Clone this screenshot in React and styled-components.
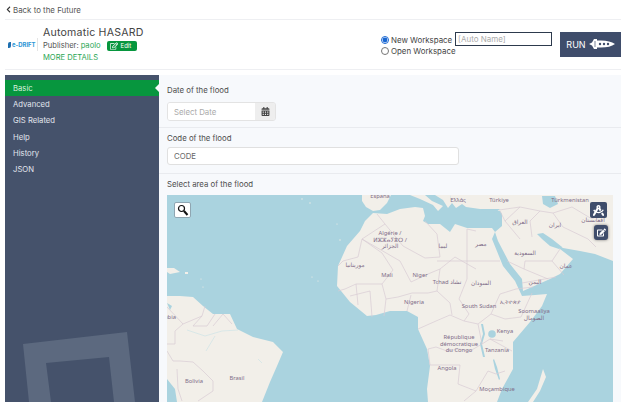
import React from 'react';
import styled, { createGlobalStyle } from 'styled-components';
import { FaCalendarAlt, FaChevronLeft, FaDraftingCompass, FaEdit, FaRegEdit } from 'react-icons/fa';

const GlobalStyle = createGlobalStyle`
  html, body { margin: 0; padding: 0; background: #fff; }
  body { font-family: Inter, "Open Sans", "Liberation Sans", sans-serif; color: #4a4a4a; overflow: hidden; }
  * { box-sizing: border-box; }
`;

const menu = ['Basic', 'Advanced', 'GIS Related', 'Help', 'History', 'JSON'];

// label text, then centre x and baseline y in page pixels; several lines share one <text>
const labels = [
  [['España'], 380, 198.5], [['Ελλάς'], 458, 203], [['Türkiye'], 499, 203], [['Türkmenistan'], 570, 203],
  [['العراق'], 520, 225], [['ایران'], 555, 228], [['افغانستان'], 593, 223], [['مصر'], 481, 247],
  [['ليبيا'], 443, 249], [['السعودية'], 525, 256], [['عمان'], 566, 269],
  [['Algérie /', 'ⵍⵣⵣⴰⵢⴻⵔ /', 'الجزائر'], 390, 236], [['موريتانيا'], 355, 268], [['Mali'], 387, 278],
  [['Niger'], 420, 278], [['Tchad تشاد'], 447, 285], [['السودان'], 481, 286], [['اليمن'], 535, 285],
  [['Nigeria'], 414, 305], [['South Sudan'], 479, 309], [['ኢትዮጵያ'], 510, 305],
  [['Soomaaliya', 'الصومال'], 534, 314], [['Kenya'], 505, 334],
  [['République', 'démocratique', 'du Congo'], 459, 340], [['Tanzania'], 497, 353], [['Angola'], 447, 371],
  [['Moçambique'], 497, 392], [['Bolivia'], 194, 384], [['Brasil'], 237, 381], [['Colombia'], 163, 320],
];

const borders = [
  'M167,308 L183,325 L175,332 L175,345 L167,345',
  'M183,325 L202,317 L205,307 M193,327 L202,317',
  'M193,327 L207,327 L215,315 M213,327 L223,315 L232,325',
  'M167,352 L173,362 L180,362 L193,363 L203,372 L213,382 L213,392 L198,402',
  'M177,370 L178,390 L182,402',
  'M377,215 L385,225 L362,240 L358,258 L343,262 L338,267',
  'M362,240 L400,262 L411,283 L428,275 L440,270 L455,258 L476,270',
  'M385,225 L403,247 L425,259 L440,258 L437,235 L425,222',
  'M362,240 L382,254 L393,271 L382,285 L356,285 L345,290 L338,292',
  'M476,232 L467,230 L467,262 L500,262',
  'M467,262 L437,262 M440,270 L437,292 L450,304 L452,316',
  'M467,262 L467,280 L459,300 L469,315 L464,322 L478,325 L491,315 L500,295 L516,290 L533,288',
  'M491,315 L505,320 L521,318 L532,294',
  'M382,285 L386,300 L398,298 L412,294 L428,294 L437,292',
  'M407,312 L411,296 M384,317 L386,300 M372,318 L370,292 M356,285 L358,306',
  'M350,297 L370,292',
  'M418,330 L436,322 L450,316 L464,322',
  'M428,350 L436,348 L447,352 L459,350 L470,352 L482,345 L478,325',
  'M482,345 L490,340 L503,342 M490,340 L512,352',
  'M428,350 L430,366 L460,366 L458,385 L476,392 L488,372 L496,375',
  'M476,392 L464,402 M496,375 L505,372',
  'M520,240 L505,222 L520,208 L540,212 L553,214 L563,228 L588,240 L596,248',
  'M505,222 L500,212 M520,208 L499,211 M540,212 L530,222 L532,238',
  'M553,214 L572,208 L592,220 L608,212',
  'M507,262 L524,270 L548,280',
  'M524,270 L525,262 L552,262 L560,250',
  'M522,284 L556,278 M564,276 L552,262',
];

const Rocket = () => (
  <svg width="26" height="12" viewBox="0 0 26 12">
    <path d="M0,6 L3,4.5 L5,1 L8,1 L8,2.5 L12,2.5 Q21,2.5 26,6 Q21,9.5 12,9.5 L8,9.5 L8,11 L5,11 L3,7.5 Z" fill="#fff" />
    <path d="M6,3 L6,9" stroke="#3f4d6b" strokeWidth="0.7" />
    <circle cx="11" cy="6" r="1.2" fill="#3f4d6b" />
    <circle cx="15" cy="6" r="1.2" fill="#3f4d6b" />
    <circle cx="19" cy="6" r="1.2" fill="#3f4d6b" />
  </svg>
);

const MapArt = () => (
  <MapSvg viewBox="167 196 446 207" preserveAspectRatio="none">
    <rect x="167" y="196" width="446" height="207" fill="#aad3df" />
    <g fill="#f2efe9">
      <path d="M362,196 L391,196 L387,204 L380,211 L373,212 L366,208 L362,202 Z" />
      <path d="M410,196 L425,196 L432,202 L443,207 L438,212 L433,206 L420,200 Z" />
      <path d="M435,196 L450,196 L452,204 L448,209 L443,201 Z" />
      <path d="M450,196 L613,196 L613,262 L595,255 L580,252 L563,249 L557,245 L560,250 L573,260 L560,275 L550,280 L523,292 L522,280 L510,265 L498,242 L495,233 L502,227 L502,215 L500,212 L480,210 L466,208 L462,205 L456,209 L452,204 Z" />
      <path d="M373,214 L387,215 L400,210 L415,208 L423,209 L425,217 L423,222 L428,225 L440,225 L450,233 L455,225 L467,229 L480,229 L492,229 L495,233 L492,240 L503,267 L515,282 L522,297 L535,296 L547,295 L542,307 L530,323 L513,343 L513,370 L502,390 L497,403 L428,403 L427,390 L430,367 L427,350 L418,330 L418,318 L407,312 L390,312 L376,316 L367,317 L350,303 L337,287 L338,267 L347,247 L360,232 L365,222 Z" />
      <path d="M537,390 L543,370 L546,378 L540,392 L533,403 L528,403 Z" />
      <path d="M167,297 L180,297 L193,298 L203,307 L213,315 L230,315 L237,330 L253,338 L273,343 L283,353 L277,367 L270,383 L262,403 L177,403 L175,390 L167,380 Z" />
      <path d="M167,269 L174,269 L180,273 L170,275 L167,273 Z" />
      <path d="M185,273 L188,273 L188,275 L185,275 Z" />
    </g>
    <g fill="#aad3df">
      <path d="M542,197 L555,197 L558,205 L550,209 L543,205 Z" />
      <path d="M537,235 L542,240 L550,247 L559,250 L562,248 L552,240 L543,234 Z" />
      <path d="M480,210 L500,210 L495,214 L484,213 Z" />
      <circle cx="492" cy="335" r="3.8" />
      <path d="M481,325 L483,335 L480,345 L483,358 L485,358 L482,345 L485,335 L483,325 Z" />
      <path d="M494,360 L497,368 L500,380 L499,381 L495,370 L493,361 Z" />
      <path d="M167,304 L172,307 L170,311 Z" />
    </g>
    <g fill="none" stroke="#cfe4e6" strokeWidth="0.7">
      <path d="M187,331 L205,337 L222,332 L238,331" />
      <path d="M215,337 L206,352 M258,360 L262,364" />
    </g>
    <g fill="#f2efe9">
      <circle cx="302" cy="200" r="0.7" /><circle cx="310" cy="204" r="0.7" />
      <circle cx="337" cy="225" r="0.6" /><circle cx="340" cy="241" r="0.7" />
      <circle cx="312" cy="278" r="0.6" /><circle cx="318" cy="282" r="0.6" />
      <circle cx="201" cy="280" r="0.6" /><circle cx="203" cy="288" r="0.6" />
    </g>
    <g fill="none" stroke="#d8cbd4" strokeWidth="0.7">
      {borders.map(d => <path key={d} d={d} />)}
    </g>
    <g fill="#806c88" fontSize="5.8" fontFamily='"Noto Sans", "DejaVu Sans", sans-serif' textAnchor="middle">
      {labels.map(([lines, x, y]) => (
        <text key={lines[0]} x={x} y={y}>
          {lines.map((t, i) => <tspan key={t} x={x} dy={i ? 6.5 : 0}>{t}</tspan>)}
        </text>
      ))}
    </g>
  </MapSvg>
);

export default function App() {
  return (
    <Page>
      <GlobalStyle />
      <BackRow><FaChevronLeft size={7} color="#333" /> Back to the Future</BackRow>
      <Header>
        <Logo><LogoMark />e-DRIFT</Logo>
        <Info>
          <Title>Automatic HASARD</Title>
          <Publisher>
            Publisher: <Green>paolo</Green>
            <EditBadge><FaRegEdit size={8} /> Edit</EditBadge>
          </Publisher>
          <Green>MORE DETAILS</Green>
        </Info>
        <Workspace>
          <RadioCol>
            <RadioLine><Radio type="radio" name="ws" defaultChecked /> New Workspace</RadioLine>
            <RadioLine><Radio type="radio" name="ws" /> Open Workspace</RadioLine>
          </RadioCol>
          <NameInput placeholder="[Auto Name]" />
          <RunButton>RUN <Rocket /></RunButton>
        </Workspace>
      </Header>
      <Body>
        <Sidebar>
          {menu.map((m, i) => <MenuItem key={m} $active={i === 0}>{m}</MenuItem>)}
          <SideDeco viewBox="0 0 154 70">
            <path fillRule="evenodd" fill="#5c697f" d="M18,12 L122,0 L130,70 L24,70 Z M41,31 L104,25 L109,70 L46,70 Z" />
          </SideDeco>
        </Sidebar>
        <Content>
          <DateField>
            <Label>Date of the flood</Label>
            <DateGroup>
              <DateInput placeholder="Select Date" />
              <CalAddon><FaCalendarAlt size={9} /></CalAddon>
            </DateGroup>
          </DateField>
          <Field>
            <Label>Code of the flood</Label>
            <CodeInput defaultValue="CODE" />
          </Field>
          <MapField>
            <Label>Select area of the flood</Label>
            <MapBox>
              <MapArt />
              <SearchBtn>
                <svg width="12" height="12" viewBox="0 0 12 12" fill="none" stroke="#111">
                  <circle cx="4.5" cy="4.5" r="3" strokeWidth="1.2" />
                  <path d="M7,7 L10.5,11" strokeWidth="2" />
                </svg>
              </SearchBtn>
              <DrawBtn><FaDraftingCompass size={11} /></DrawBtn>
              <EditBtn><FaEdit size={9} /></EditBtn>
            </MapBox>
          </MapField>
        </Content>
      </Body>
    </Page>
  );
}

const Page = styled.div`
  width: 624px;
  height: 407px;
  padding: 0 3px 0 5px;
  display: flex;
  flex-direction: column;
  overflow: hidden;
`;

const BackRow = styled.div`
  height: 20px;
  display: flex;
  align-items: center;
  gap: 1px;
  font-size: 7.9px;
  color: #555;
  border-bottom: 1px solid #eeeff2;
`;

const Header = styled.div`
  height: 50px;
  display: flex;
  align-items: center;
  border-bottom: 1px solid #eeeff2;
`;

const Logo = styled.div`
  width: 33px;
  margin-right: 5px;
  padding-left: 3px;
  height: 13px;
  display: flex;
  align-items: center;
  gap: 1px;
  font-size: 5.9px;
  font-weight: 700;
  color: #2b96d6;
  border-right: 1px solid #e4e4e4;
  white-space: nowrap;
`;

const LogoMark = styled.span`
  width: 3px;
  height: 6px;
  background: #1d6fb0;
  border-radius: 2px 0 2px 0;
`;

const Info = styled.div`
  display: flex;
  flex-direction: column;
  align-items: flex-start;
  font-size: 7.6px;
  line-height: 12px;
  padding-top: 1px;
`;

const Title = styled.div`
  font-size: 10.6px;
  line-height: 14px;
  color: #444;
  letter-spacing: 0.2px;
`;

const Publisher = styled.div`
  display: flex;
  align-items: center;
  gap: 2px;
  color: #555;
`;

const Green = styled.span`
  color: #2aa655;
`;

const EditBadge = styled.span`
  display: inline-flex;
  align-items: center;
  gap: 3px;
  height: 10px;
  width: 30px;
  margin-left: 4px;
  padding-left: 3px;
  font-size: 6px;
  color: #fff;
  background: #07963e;
  border-radius: 2px;
`;

const Workspace = styled.div`
  margin-left: auto;
  display: flex;
  align-items: center;
`;

const RadioCol = styled.div`
  width: 74px;
  display: flex;
  flex-direction: column;
  gap: 1px;
  padding-top: 2px;
`;

const RadioLine = styled.label`
  display: flex;
  align-items: center;
  gap: 2px;
  height: 10.5px;
  font-size: 7.9px;
  color: #444;
  white-space: nowrap;
`;

const Radio = styled.input`
  width: 8px;
  height: 8px;
  margin: 0;
  accent-color: #1967d2;
`;

const NameInput = styled.input`
  width: 97px;
  height: 14px;
  margin-bottom: 11px;
  padding: 0 2px;
  font: 8px Inter, sans-serif;
  border: 1.5px solid #2d3a4d;
  outline: none;
  &::placeholder { color: #aaa; }
`;

const RunButton = styled.button`
  width: 61px;
  height: 25px;
  margin-left: 8px;
  margin-bottom: 1px;
  padding: 0;
  display: flex;
  align-items: center;
  justify-content: center;
  gap: 3px;
  font: 9px Inter, sans-serif;
  color: #fff;
  background: #3f4d6b;
  border: none;
`;

const Body = styled.div`
  margin-top: 5px;
  height: 327px;
  display: flex;
`;

const Sidebar = styled.div`
  position: relative;
  width: 154px;
  padding-top: 5px;
  background: #45526b;
  overflow: hidden;
`;

const MenuItem = styled.div`
  position: relative;
  height: 16.3px;
  padding-left: 8px;
  display: flex;
  align-items: center;
  font-size: 7.7px;
  color: ${p => (p.$active ? '#d8f0df' : '#e2e6ee')};
  background: ${p => (p.$active ? '#07963e' : 'transparent')};
  &::after {
    content: ${p => (p.$active ? '""' : 'none')};
    position: absolute;
    right: 0;
    top: 4px;
    border: 4px solid transparent;
    border-right-color: #f7f9fc;
    border-left: none;
  }
`;

const SideDeco = styled.svg`
  position: absolute;
  left: 0;
  bottom: 0;
  width: 154px;
  height: 70px;
`;

const Content = styled.div`
  flex: 1;
  background: #f7f9fc;
  display: flex;
  flex-direction: column;
`;

const Label = styled.div`
  font-size: 7.8px;
  line-height: 11px;
  color: #4d4d4d;
`;

const Field = styled.div`
  height: 46px;
  padding: 5px 0 0 8px;
  border-bottom: 1px solid #e9ebef;
  ${Label} { margin-bottom: 3px; }
`;

const DateField = styled(Field)`
  height: 54px;
  padding-top: 10px;
  ${Label} { margin-bottom: 6px; }
`;

const MapField = styled.div`
  padding: 5px 8px 0;
  ${Label} { margin-bottom: 5px; }
`;

const DateGroup = styled.div`
  width: 109px;
  height: 19px;
  display: flex;
  border: 1px solid #e3e3e3;
  border-radius: 3px;
  overflow: hidden;
`;

const DateInput = styled.input`
  width: 87px;
  padding: 0 6px;
  font: 7.8px Inter, sans-serif;
  border: none;
  outline: none;
  &::placeholder { color: #aaa; }
`;

const CalAddon = styled.span`
  flex: 1;
  display: flex;
  align-items: center;
  justify-content: center;
  color: #444;
  background: #eeeeee;
`;

const CodeInput = styled.input`
  display: block;
  width: 292px;
  height: 18px;
  padding: 0 6px;
  font: 7.8px Inter, sans-serif;
  color: #666;
  background: #fff;
  border: 1px solid #e0e0e0;
  border-radius: 3px;
  outline: none;
`;

const MapBox = styled.div`
  position: relative;
  width: 446px;
  height: 207px;
  overflow: hidden;
`;

const MapSvg = styled.svg`
  display: block;
  width: 100%;
  height: 100%;
`;

const SearchBtn = styled.div`
  position: absolute;
  left: 7px;
  top: 7px;
  width: 17px;
  height: 16px;
  display: flex;
  align-items: center;
  justify-content: center;
  background: #fff;
  border: 1px solid #8fa6b2;
  border-radius: 2px;
`;

const DrawBtn = styled.div`
  position: absolute;
  left: 423px;
  top: 7px;
  width: 17px;
  height: 16px;
  display: flex;
  align-items: center;
  justify-content: center;
  color: #fff;
  background: #3f4d6b;
  border-radius: 2px;
`;

const EditBtn = styled(DrawBtn)`
  left: 427px;
  top: 30px;
  width: 14px;
  height: 15px;
  border-radius: 3px;
  box-shadow: 0 0 3px rgba(0, 0, 0, 0.5);
`;
